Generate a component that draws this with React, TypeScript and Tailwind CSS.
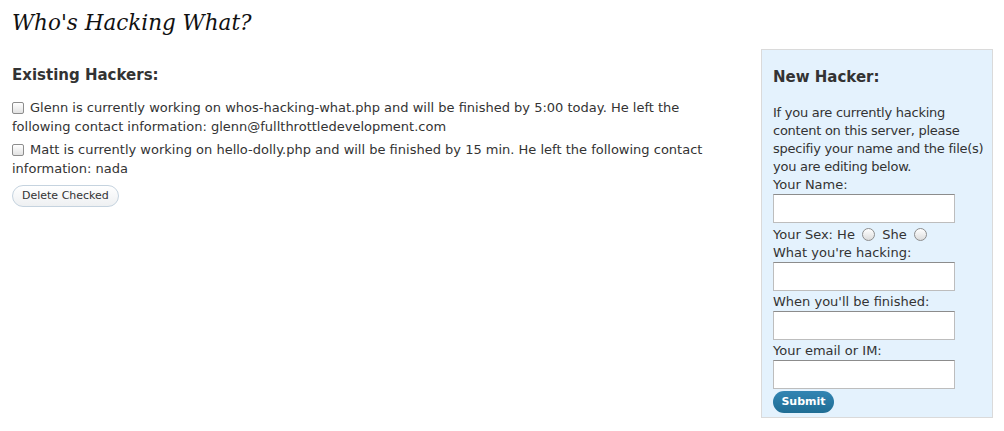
import React from "react"

const sans = "font-['DejaVu_Sans',sans-serif]"

function Box() {
    return (
        <span className="inline-block align-[-2px] w-[12px] h-[12px] mr-[6px] rounded-[2px] border border-[#8d8d8d] bg-gradient-to-b from-white to-[#e2e2e2]" />
    )
}

function Radio() {
    return (
        <span className="inline-block align-[-2px] w-[13px] h-[13px] mx-[3px] rounded-full border border-[#8d8d8d] bg-gradient-to-b from-white to-[#dcdcdc]" />
    )
}

function Field() {
    return <div className="w-[182px] h-[29px] bg-white border border-[#bdbdbd] border-t-[#8c8c8c] mb-[2px]" />
}

export default function App() {
    const hackers = [
        { name: 'Glenn', file: 'whos-hacking-what.php', when: '5:00 today', contact: 'glenn@fullthrottledevelopment.com' },
        { name: 'Matt', file: 'hello-dolly.php', when: '15 min', contact: 'nada' },
    ]

    return (
        <div className={`w-[1004px] h-[431px] bg-white text-[#333] ${sans} px-[12px] overflow-hidden`}>

            {/* TITLE */}
            <h1 className="font-['DejaVu_Serif',serif] italic text-[21.5px] leading-[30px] pt-[8px] text-[#111]">
                Who's Hacking What?
            </h1>

            <div className="flex items-start mt-[11px]">

                {/* EXISTING */}
                <div className="flex-1 pt-[16px] pr-[40px]">
                    <h2 className="text-[15px] font-bold leading-[20px] mb-[13px]">Existing Hackers:</h2>

                    {hackers.map(h => (
                        <p key={h.name} className="text-[13px] leading-[19px] mb-[4px]">
                            <Box />
                            {h.name} is currently working on {h.file} and will be finished by {h.when}. He left the following contact information: {h.contact}
                        </p>
                    ))}

                    <button className="h-[22px] px-[9px] rounded-full border border-[#c5d3df] bg-gradient-to-b from-white to-[#eef0f2] text-[11px] text-[#333]">
                        Delete Checked
                    </button>
                </div>

                {/* NEW HACKER */}
                <div className="w-[232px] h-[369px] shrink-0 mr-[-1px] bg-[#e4f2fd] border border-[#dadada] pt-[17px] pl-[11px] pr-[3px] text-[13px] leading-[18px]">
                    <h2 className="text-[15px] font-bold leading-[20px] mb-[17px]">New Hacker:</h2>
                    <p className="tracking-[-0.25px]">If you are currently hacking content on this server, please specifiy your name and the file(s) you are editing below.</p>
                    <div>Your Name:</div>
                    <Field />
                    <div className="leading-[19px]">Your Sex: He <Radio /> She <Radio /></div>
                    <div>What you're hacking:</div>
                    <Field />
                    <div>When you'll be finished:</div>
                    <Field />
                    <div>Your email or IM:</div>
                    <Field />
                    <button className="w-[61px] h-[22px] rounded-full bg-gradient-to-b from-[#3285b3] to-[#1f6d94] text-white text-[11px] font-bold">
                        Submit
                    </button>
                </div>
            </div>
        </div>
    )
}
